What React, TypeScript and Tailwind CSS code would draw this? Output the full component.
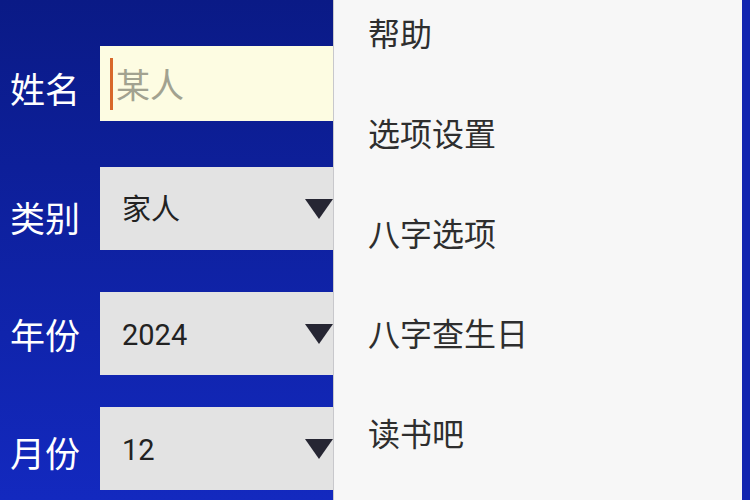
import React from "react";

const cjk = "font-['Noto_Sans_CJK_SC','Noto_Sans',sans-serif]";

const Triangle = () => (
    <svg width="28" height="20" viewBox="0 0 28 20" className="shrink-0">
        <path d="M0 0 L28 0 L14 20 Z" fill="#262633" />
    </svg>
);

interface SelectRowProps {
    label: string;
    value: string;
    top: string;
    labelShift: string;
}

const SelectRow = ({ label, value, top, labelShift }: SelectRowProps) => (
    <div className={`flex items-center ${top}`}>
        <div className={`w-[100px] pl-[10px] text-white text-[35px] leading-none ${labelShift}`}>{label}</div>
        <div className="flex items-center w-[233px] h-[83px] bg-[#e3e3e3] pl-[22px]">
            <span className="flex-1 pt-[3px] text-[#222] text-[29px] leading-none font-['Roboto','Noto_Sans_CJK_SC',sans-serif]">
                {value}
            </span>
            <Triangle />
        </div>
    </div>
);

const menuItems = ["帮助", "选项设置", "八字选项", "八字查生日", "读书吧"];

export default function App() {
    return (
        <div className={`flex w-[750px] h-[500px] bg-[linear-gradient(to_bottom,#0a1a86,#1329bf)] ${cjk}`}>
            <div className="relative w-[742px] h-[500px] shrink-0">
                <div className="flex flex-col">
                    <div className="flex items-center mt-[46px]">
                        <div className="w-[100px] pl-[10px] pt-[8px] text-white text-[35px] leading-none">姓名</div>
                        <div className="flex items-center w-[233px] h-[75px] bg-[#fdfce2] pl-[10px]">
                            <div className="w-[3px] h-[52px] bg-[#d8682a]" />
                            <span className="ml-[3px] text-[#a2a290] text-[34px] leading-none">某人</span>
                        </div>
                    </div>
                    <SelectRow label="类别" value="家人" top="mt-[46px]" labelShift="pt-[16px]" />
                    <SelectRow label="年份" value="2024" top="mt-[42px]" labelShift="" />
                    <SelectRow label="月份" value="12" top="mt-[32px]" labelShift="pt-[6px]" />
                </div>

                {/* popup menu over the form */}
                <div className="absolute left-[333px] right-0 top-0 bottom-0 bg-[#f7f7f7] border-l border-[#c8c8cc] flex flex-col">
                    {menuItems.map((item) => (
                        <div key={item} className="h-[100px] flex items-center pl-[34px] pb-[36px] text-[#2e2e2e] text-[32px] leading-none">
                            {item}
                        </div>
                    ))}
                </div>
            </div>
            <div className="w-[8px] h-[500px] shrink-0 bg-[#1226b0]" />
        </div>
    );
}
